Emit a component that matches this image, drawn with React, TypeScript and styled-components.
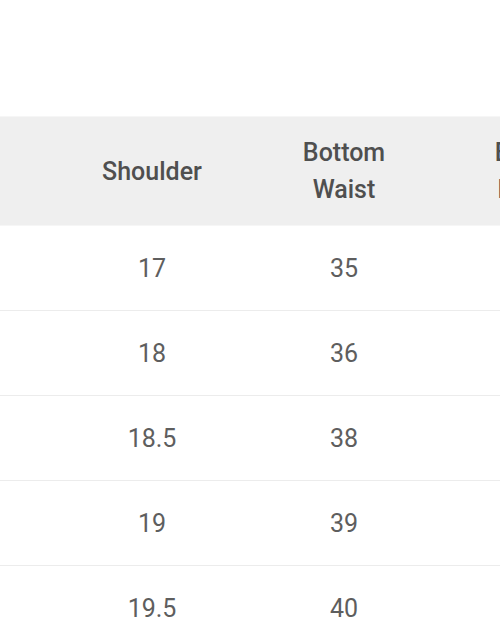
import React from "react";
import styled, { createGlobalStyle } from "styled-components";

const Global = createGlobalStyle`
  html, body { margin: 0; padding: 0; background: #ffffff; }
  body { width: 500px; height: 640px; overflow: hidden; font-family: Roboto, "Liberation Sans", sans-serif; }
`;

const Page = styled.div`
  width: 500px;
  height: 640px;
  overflow: hidden;
  padding-top: 116px;
  box-sizing: border-box;
`;

const Grid = styled.div`
  display: grid;
  grid-template-columns: 56px 192px 192px 192px;
  width: 632px;
`;

const HeadCell = styled.div`
  height: 108px;
  background: #efefef;
  border-top: 1px solid #f6f6f6;
  border-bottom: 1px solid #f6f6f6;
  display: flex;
  align-items: center;
  justify-content: center;
  text-align: center;
  font-size: 25px;
  font-weight: 500;
  line-height: 37px;
  color: #4f4f4f;
`;

const Cell = styled.div`
  height: 84px;
  border-bottom: 1px solid #ececec;
  display: flex;
  align-items: center;
  justify-content: center;
  font-size: 25px;
  font-weight: 400;
  color: #5e5e5e;
`;

const headers: string[][] = [[], ["Shoulder"], ["Bottom", "Waist"], ["Bottom", "Length"]];
const rows: string[][] = [
  ["", "17", "35", ""],
  ["", "18", "36", ""],
  ["", "18.5", "38", ""],
  ["", "19", "39", ""],
  ["", "19.5", "40", ""],
];

export default function App() {
  return (
    <Page>
      <Global />
      <Grid>
        {headers.map((h, i) => (
          <HeadCell key={"h" + i}>
            <div>
              {h.map((line, j) => (
                <div key={j}>{line}</div>
              ))}
            </div>
          </HeadCell>
        ))}
        {rows.map((r, ri) =>
          r.map((v, ci) => <Cell key={ri + "-" + ci}>{v}</Cell>)
        )}
      </Grid>
    </Page>
  );
}
